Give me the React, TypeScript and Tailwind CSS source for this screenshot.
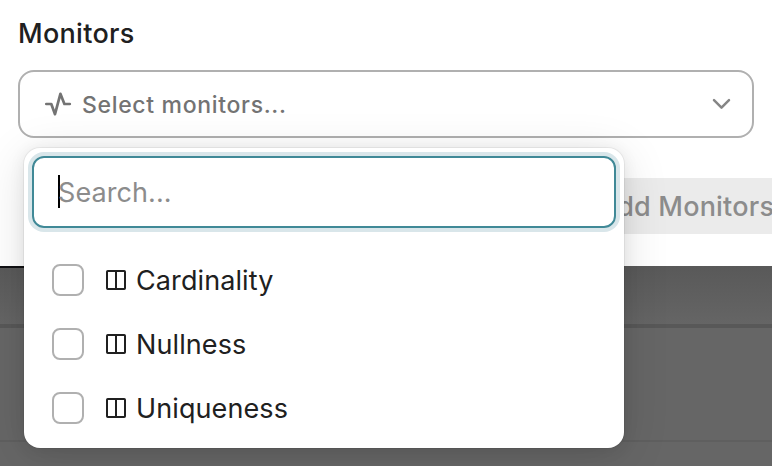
const monitors = ['Cardinality', 'Nullness', 'Uniqueness'];

function PulseIcon() {
  return (
    <svg className="h-7 w-7 shrink-0" viewBox="0 0 28 28" fill="none" stroke="currentColor" strokeWidth="2.7" strokeLinecap="round" strokeLinejoin="round">
      <path d="M2.3 14h5L11 24.2 16.4 3.8 20.4 14h5.4" />
    </svg>
  );
}

function ChevronIcon() {
  return (
    <svg className="h-5 w-5 shrink-0" viewBox="0 0 20 20" fill="none" stroke="currentColor" strokeWidth="2.5" strokeLinecap="round" strokeLinejoin="round">
      <path d="M2 6.2 9.5 13.6 17 6.2" />
    </svg>
  );
}

function ColumnsIcon() {
  return (
    <svg className="h-5 w-5 shrink-0" viewBox="0 0 20 20" fill="none" stroke="currentColor" strokeWidth="2">
      <rect x="1" y="1" width="18" height="18" rx="0.8" />
      <path d="M10 1v18" />
    </svg>
  );
}

function Dropdown() {
  return (
    <div className="absolute left-6 top-[148px] flex h-[300px] w-[600px] flex-col rounded-2xl bg-white px-2 pt-2 shadow-[0_0_0_1px_rgba(0,0,0,0.05),0_8px_48px_rgba(0,0,0,0.12),0_2px_16px_rgba(0,0,0,0.08)]">
      <div className="flex h-[72px] shrink-0 items-center rounded-[12px] border-2 border-[#408997] pl-6 ring-4 ring-[#d9e6ea]">
        <div className="mb-px h-[33px] w-0.5 bg-black" />
        <span className="-ml-0.5 pt-0.5 text-[27px] leading-8 tracking-[0.08px] text-[#8c8c8c]">Search...</span>
      </div>
      <ul className="mt-5 flex flex-col">
        {monitors.map((name) => (
          <li key={name} className="flex h-16 items-center pl-5 text-[#202020]">
            <span className="h-8 w-8 shrink-0 rounded-lg border-2 border-[#b0b0b0]" />
            <span className="ml-[22px] flex">
              <ColumnsIcon />
            </span>
            <span className="ml-2.5 pt-0.5 text-[27px] leading-8 tracking-[0.1px]">{name}</span>
          </li>
        ))}
      </ul>
    </div>
  );
}

export default function App() {
  return (
    <div className="relative flex h-[466px] w-[772px] flex-col overflow-hidden bg-[#666666] font-['Inter','Liberation_Sans',sans-serif]">
      <section className="flex h-[266px] shrink-0 flex-col bg-white">
        <h2 className="mt-[18px] pl-[18px] text-[27px] font-medium leading-8 tracking-[0.3px] text-[#202020]">Monitors</h2>
        <div className="ml-[18px] mt-5 flex h-[68px] w-[736px] shrink-0 items-center rounded-2xl border-2 border-[#b0b0b0] pl-6 pr-5 text-[#737373]">
          <PulseIcon />
          <span className="ml-2.5 pt-0.5 text-[23px] font-medium leading-8 tracking-[0.67px]">Select monitors...</span>
          <span className="ml-auto flex text-[#858585]">
            <ChevronIcon />
          </span>
        </div>
        <div className="ml-[580px] mt-10 flex h-14 shrink-0 items-center bg-[#ebebeb] pl-[18px]">
          <span className="whitespace-nowrap pt-0.5 text-[27px] font-medium leading-8 tracking-[0.2px] text-[#8c8c8c]">Add Monitors</span>
        </div>
      </section>
      <div className="flex h-[58px] shrink-0 bg-linear-to-b from-[#595959] to-[#656565]">
        <div className="h-0.5 w-10 bg-[#111114]" />
      </div>
      <div className="h-1 shrink-0 bg-[#585858]" />
      <div className="h-28 shrink-0" />
      <div className="h-0.5 shrink-0 bg-[#5f5f5f]" />
      <Dropdown />
    </div>
  );
}
